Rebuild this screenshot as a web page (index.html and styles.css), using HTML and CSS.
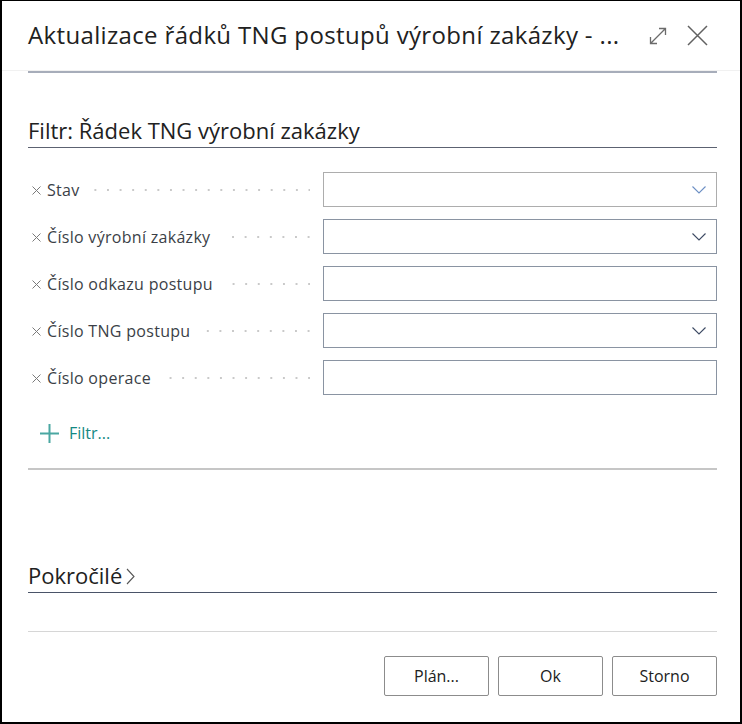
FILE: index.html
```html
<!DOCTYPE html>
<html lang="cs">
<head>
<meta charset="utf-8">
<title>Aktualizace řádků TNG postupů výrobní zakázky</title>
<link rel="stylesheet" href="styles.css">
</head>
<body>
<div class="dialog">
  <header class="dlg-header">
    <h1 class="dlg-title">Aktualizace řádků TNG postupů výrobní zakázky - ...</h1>
    <div class="header-actions">
      <svg class="icon-expand" width="20" height="20" viewBox="0 0 20 20" aria-hidden="true">
        <path d="M2.5 17.5 L17.5 2.5 M11 2.5 H17.5 V9 M2.5 11 V17.5 H9" fill="none" stroke="#6b6b6b" stroke-width="1.3"/>
      </svg>
      <svg class="icon-close" width="21" height="21" viewBox="0 0 21 21" aria-hidden="true">
        <path d="M1 1 L20 20 M20 1 L1 20" fill="none" stroke="#616161" stroke-width="1.5"/>
      </svg>
    </div>
  </header>
  <div class="header-rule"></div>

  <section class="filter-section">
    <h2 class="section-title">Filtr: Řádek TNG výrobní zakázky</h2>
    <div class="rows">
      <div class="row">
        <span class="label-wrap"><svg class="x" width="9" height="9" viewBox="0 0 9 9"><path d="M0.5 0.5 L8.5 8.5 M8.5 0.5 L0.5 8.5" stroke="#7a7a7a" stroke-width="1"/></svg><span class="label">Stav</span><span class="leader"></span></span>
        <span class="field field-light"><svg class="chev chev-blue" width="14" height="8" viewBox="0 0 14 8"><path d="M0.5 0.5 L7 7 L13.5 0.5" fill="none" stroke-width="1.1"/></svg></span>
      </div>
      <div class="row">
        <span class="label-wrap"><svg class="x" width="9" height="9" viewBox="0 0 9 9"><path d="M0.5 0.5 L8.5 8.5 M8.5 0.5 L0.5 8.5" stroke="#7a7a7a" stroke-width="1"/></svg><span class="label">Číslo výrobní zakázky</span><span class="leader"></span></span>
        <span class="field"><svg class="chev" width="14" height="8" viewBox="0 0 14 8"><path d="M0.5 0.5 L7 7 L13.5 0.5" fill="none" stroke-width="1.1"/></svg></span>
      </div>
      <div class="row">
        <span class="label-wrap"><svg class="x" width="9" height="9" viewBox="0 0 9 9"><path d="M0.5 0.5 L8.5 8.5 M8.5 0.5 L0.5 8.5" stroke="#7a7a7a" stroke-width="1"/></svg><span class="label">Číslo odkazu postupu</span><span class="leader"></span></span>
        <span class="field"></span>
      </div>
      <div class="row">
        <span class="label-wrap"><svg class="x" width="9" height="9" viewBox="0 0 9 9"><path d="M0.5 0.5 L8.5 8.5 M8.5 0.5 L0.5 8.5" stroke="#7a7a7a" stroke-width="1"/></svg><span class="label">Číslo TNG postupu</span><span class="leader"></span></span>
        <span class="field"><svg class="chev" width="14" height="8" viewBox="0 0 14 8"><path d="M0.5 0.5 L7 7 L13.5 0.5" fill="none" stroke-width="1.1"/></svg></span>
      </div>
      <div class="row">
        <span class="label-wrap"><svg class="x" width="9" height="9" viewBox="0 0 9 9"><path d="M0.5 0.5 L8.5 8.5 M8.5 0.5 L0.5 8.5" stroke="#7a7a7a" stroke-width="1"/></svg><span class="label">Číslo operace</span><span class="leader"></span></span>
        <span class="field"></span>
      </div>
    </div>
    <div class="add-filter">
      <svg class="plus" width="19" height="19" viewBox="0 0 19 19"><path d="M9.5 0 V19 M0 9.5 H19" stroke="#4aa7a2" stroke-width="2"/></svg>
      <span class="add-text">Filtr...</span>
    </div>
  </section>
  <div class="rule-mid"></div>

  <section class="advanced">
    <h2 class="section-title adv-title">Pokročilé<svg class="adv-chev" width="9" height="17" viewBox="0 0 9 17"><path d="M1 1 L8 8.5 L1 16" fill="none" stroke="#555" stroke-width="1.1"/></svg></h2>
  </section>
  <div class="rule-foot"></div>

  <footer class="actions">
    <button class="btn">Plán...</button>
    <button class="btn">Ok</button>
    <button class="btn">Storno</button>
  </footer>
</div>
</body>
</html>
```

FILE: styles.css
```css
* { box-sizing: border-box; }

html, body {
  margin: 0;
  padding: 0;
  background: #fff;
}

body {
  font-family: "Open Sans", "Noto Sans", sans-serif;
  color: #212121;
}

.dialog {
  width: 742px;
  height: 724px;
  border: 2px solid #000;
  border-top-width: 1px;
  background: #fff;
  display: flex;
  flex-direction: column;
}

.dlg-header {
  height: 70px;
  flex: none;
  display: flex;
  align-items: center;
  padding: 0 32px 0 26px;
  border-bottom: 1px solid #f1f1f1;
}

.dlg-title {
  flex: 1;
  margin: 0;
  font-size: 24px;
  letter-spacing: 0.35px;
  font-weight: 400;
  line-height: 32px;
  color: #212121;
  white-space: nowrap;
  padding-bottom: 1px;
}

.header-actions {
  display: flex;
  align-items: center;
  gap: 19px;
}

.icon-expand { margin-top: 1px; }

.header-rule {
  height: 2px;
  flex: none;
  margin: 0 23px 0 26px;
  background: #a7adba;
}

.filter-section {
  padding: 0 23px 0 26px;
}

.section-title {
  margin: 42px 0 0;
  font-size: 22px;
  font-weight: 400;
  line-height: 30px;
  padding-bottom: 2px;
  border-bottom: 1px solid #5c6271;
  color: #212121;
}

.rows {
  margin-top: 24px;
  display: flex;
  flex-direction: column;
  gap: 12px;
}

.row {
  display: grid;
  grid-template-columns: 295px 1fr;
  height: 35px;
  align-items: center;
}

.label-wrap {
  display: flex;
  align-items: center;
  padding-left: 4px;
  height: 100%;
}

.x { flex: none; margin-right: 6px; margin-top: 1px; }

.label {
  font-size: 16px;
  letter-spacing: 0.3px;
  color: #3b3f47;
  white-space: nowrap;
}

.leader {
  flex: 1;
  height: 2px;
  margin: 1px 13px 0 12px;
  background-image: linear-gradient(to right, transparent 10.6px, #c9c9c9 10.6px);
  background-size: 12.6px 2px;
  background-repeat: repeat-x;
  background-position: right center;
}

.field {
  height: 35px;
  border: 1px solid #8a94a2;
  display: flex;
  align-items: center;
  justify-content: flex-end;
  padding-right: 10px;
}

.field-light { border-color: #adadad; }

.chev path { stroke: #3d4a63; }
.chev-blue path { stroke: #6c8fc4; }

.add-filter {
  margin-top: 23px;
  height: 30px;
  display: flex;
  align-items: center;
  padding-left: 12px;
}

.plus { margin-right: 10px; }

.add-text {
  font-size: 16px;
  color: #138883;
}

.rule-mid {
  height: 2px;
  flex: none;
  margin: 20px 23px 0 26px;
  background: #c6c6c6;
}

.advanced {
  padding: 0 23px 0 26px;
}

.adv-title {
  margin-top: 90px;
  border-bottom-color: #4a5468;
  display: flex;
  align-items: center;
}

.adv-chev { margin-left: 4px; margin-top: 3px; }

.rule-foot {
  height: 1px;
  flex: none;
  margin: 38px 23px 0 26px;
  background: #d6d6d6;
}

.actions {
  display: flex;
  justify-content: flex-end;
  gap: 9px;
  padding: 24px 23px 0 26px;
}

.btn {
  width: 105px;
  height: 40px;
  border: 1px solid #8c8c8c;
  border-radius: 2px;
  background: #fff;
  font-family: "Open Sans", "Noto Sans", sans-serif;
  font-size: 16px;
  color: #212121;
  padding: 0;
}
```
